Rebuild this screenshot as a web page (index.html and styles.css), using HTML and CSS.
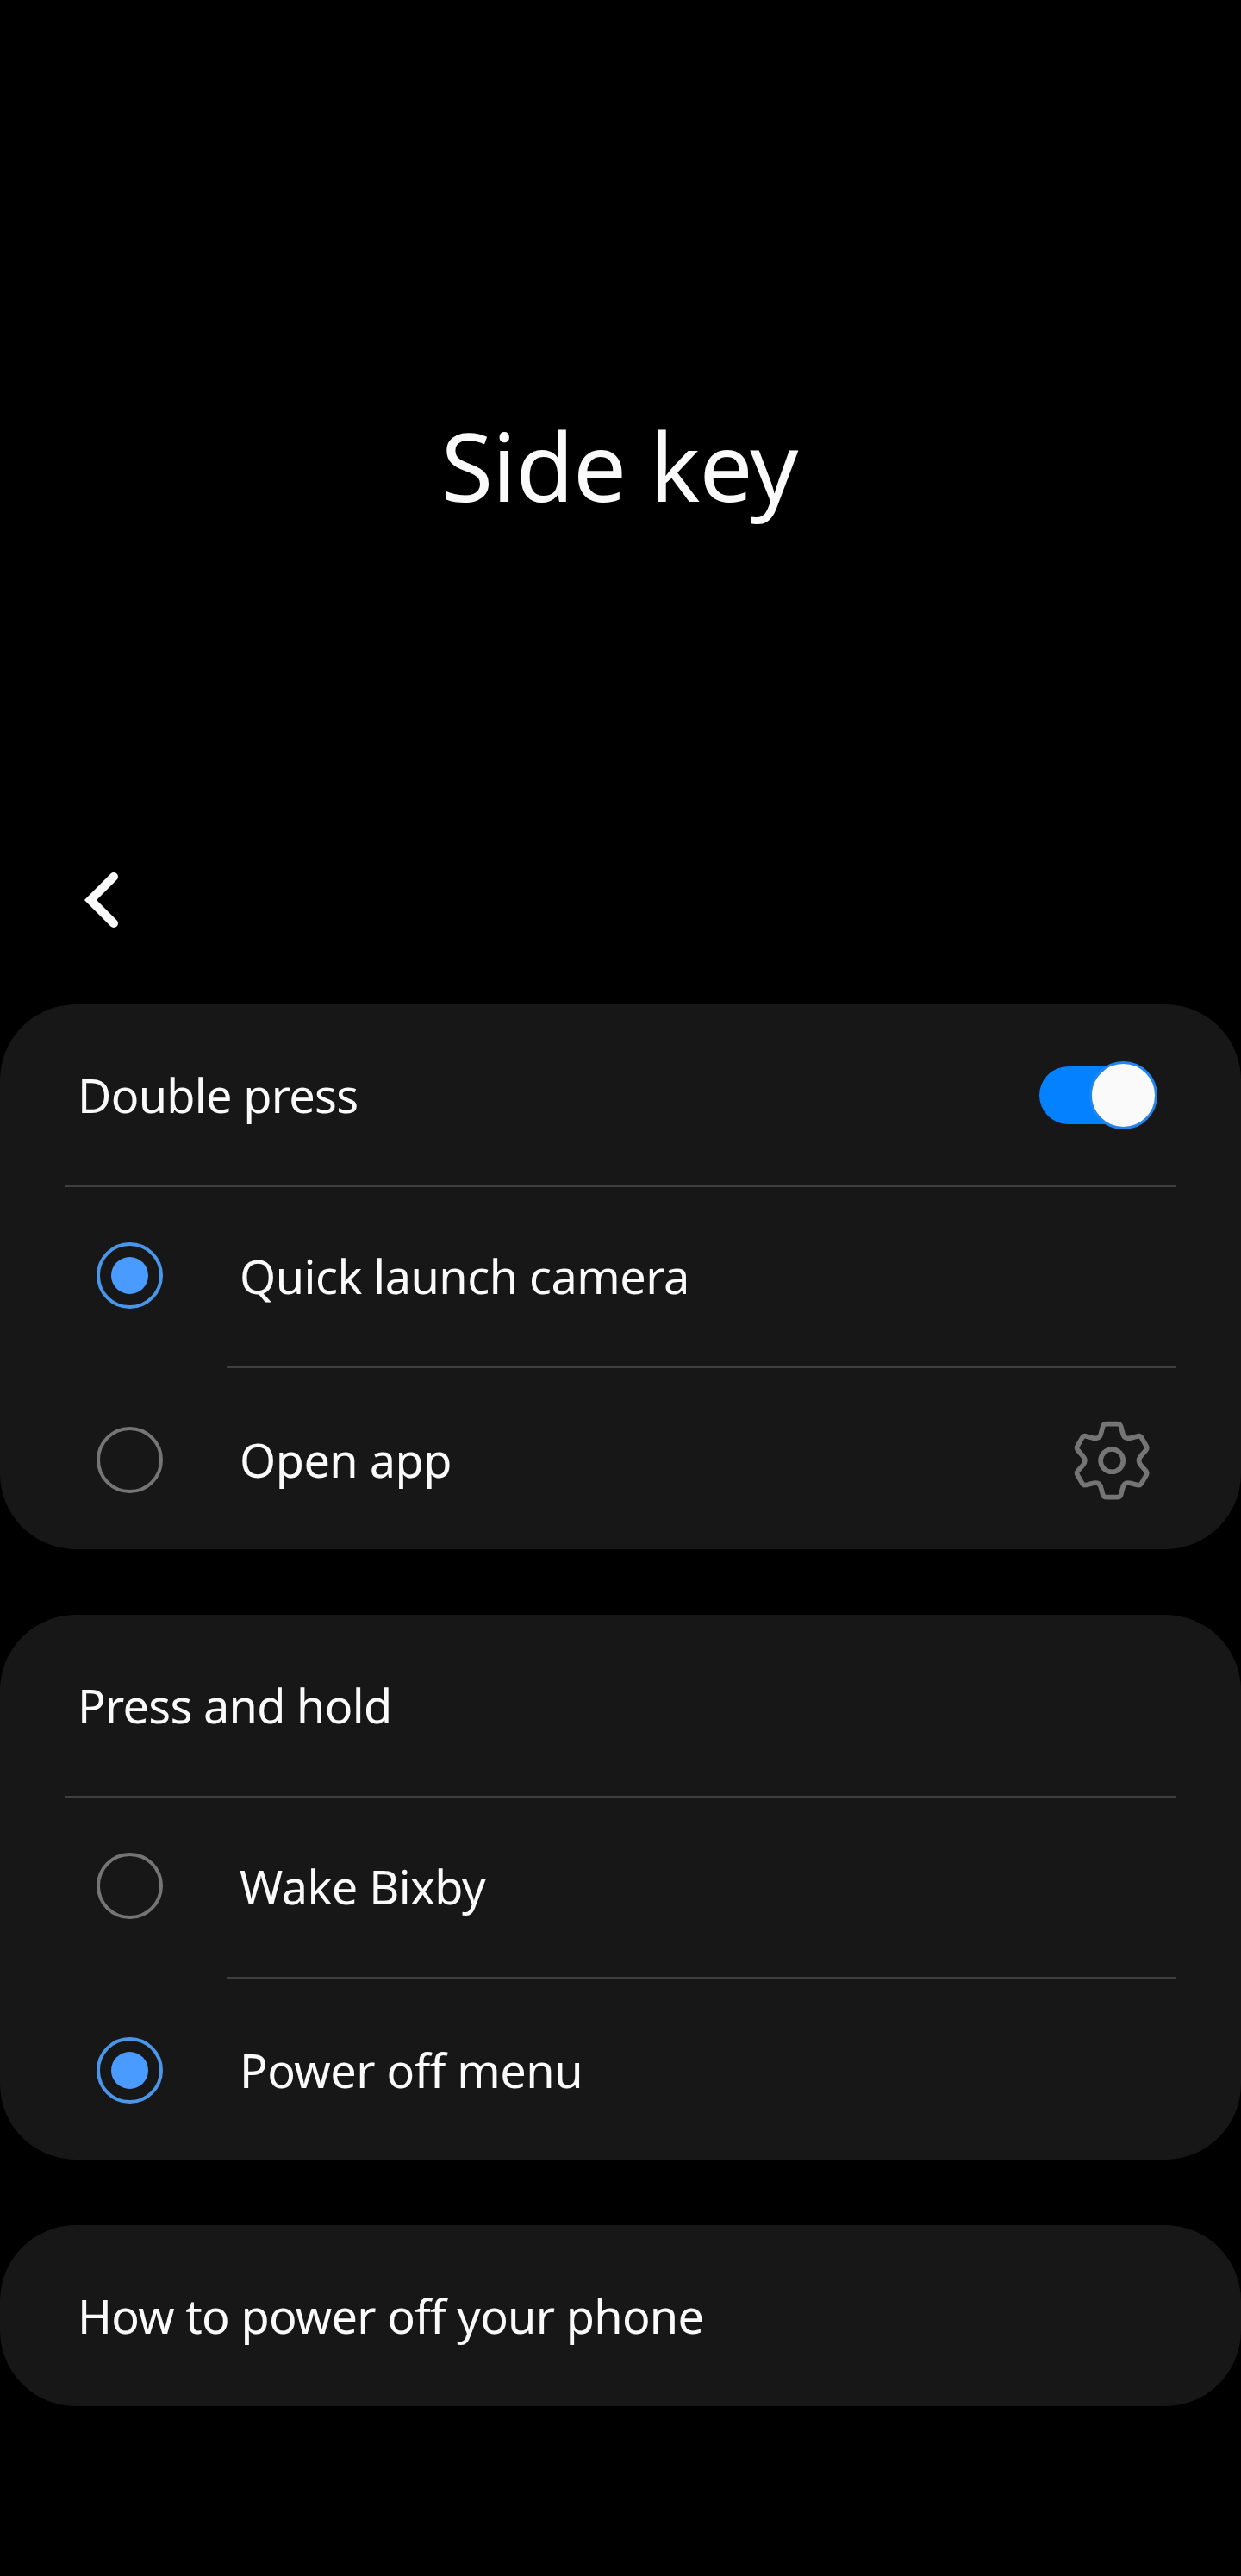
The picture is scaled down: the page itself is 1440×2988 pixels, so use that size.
FILE: index.html
```html
<!DOCTYPE html>
<html lang="en">
<head>
  <meta charset="UTF-8">
  <title>Side key</title>
  <link rel="stylesheet" href="styles.css">
</head>

<body>
  <div class="hero">
    <h1 class="hero-title">Side key</h1>
  </div>
  <div class="back-bar">
    <svg class="back-icon" width="44" height="68" viewBox="0 0 44 68">
      <path d="M38 7 L11 34 L38 61" fill="none" stroke="#fafafa" stroke-width="10" stroke-linecap="round" stroke-linejoin="miter"/>
    </svg>
  </div>

  <div class="card">
    <div class="card-head">
      <span class="card-label">Double press</span>
      <div class="switch"><div class="switch-thumb"></div></div>
    </div>
    <div class="line"></div>
    <div class="option">
      <div class="radio checked"></div>
      <span class="option-label">Quick launch camera</span>
    </div>
    <div class="line inset"></div>
    <div class="option">
      <div class="radio"></div>
      <span class="option-label">Open app</span>
      <svg class="gear" width="93" height="97" viewBox="40 16 280 290">
        <path d="M160 35 H198 Q208 35 211 45 L217 68 Q222 90 245 84 L268 78 Q278 75 283 84 L299 112 Q304 121 297 128 L281 146 Q266 163 281 180 L297 198 Q304 205 299 214 L283 242 Q278 251 268 248 L245 242 Q222 236 217 258 L211 281 Q208 291 198 291 H160 Q150 291 147 281 L141 258 Q136 236 113 242 L90 248 Q80 251 75 242 L59 214 Q54 205 61 198 L77 180 Q92 163 77 146 L61 128 Q54 121 59 112 L75 84 Q80 75 90 78 L113 84 Q136 90 141 68 L147 45 Q150 35 160 35 Z" fill="none" stroke="#757575" stroke-width="17"/>
        <circle cx="179" cy="163" r="39.5" fill="none" stroke="#757575" stroke-width="17"/>
      </svg>
    </div>
  </div>

  <div class="card">
    <div class="card-head">
      <span class="card-label">Press and hold</span>
    </div>
    <div class="line"></div>
    <div class="option">
      <div class="radio"></div>
      <span class="option-label">Wake Bixby</span>
    </div>
    <div class="line inset"></div>
    <div class="option">
      <div class="radio checked"></div>
      <span class="option-label">Power off menu</span>
    </div>
  </div>

  <div class="card">
    <div class="card-head">
      <span class="card-label">How to power off your phone</span>
    </div>
  </div>
</body>
</html>
```

FILE: styles.css
```css
html {
  font-family: 'Noto Sans', 'Open Sans', sans-serif;
  background: #000;
}
html, body {
  margin: 0;
  width: 100%;
}
*,
*::before,
*::after {
  box-sizing: border-box;
}
body {
  min-height: 2988px;
  color: #fafafa;
}
.hero {
  display: flex;
  align-items: center;
  justify-content: center;
  height: 1002px;
  padding: 76px 3px 0 0;
}
.hero-title {
  margin: 0;
  font-size: 110px;
  font-weight: 400;
  letter-spacing: -1px;
  line-height: 1;
}
.back-bar {
  display: flex;
  align-items: flex-start;
  height: 163px;
  padding: 8px 0 0 94px;
}
.card {
  margin-bottom: 76px;
  border-radius: 88px;
  background: #171717;
}
.card-head {
  display: flex;
  align-items: center;
  justify-content: space-between;
  height: 210px;
  padding: 0 100px 0 90px;
}
.card-label,
.option-label {
  font-size: 54px;
  font-weight: 400;
  letter-spacing: -0.7px;
}
.option-label {
  letter-spacing: -0.5px;
}
.line {
  height: 2px;
  margin: 0 75px;
  background: #3f3f3f;
}
.line.inset {
  margin-left: 263px;
}
.option {
  display: flex;
  align-items: center;
  height: 208px;
  padding: 0 103px 3px 112px;
}
.option:last-child {
  height: 210px;
  padding-top: 2px;
  padding-bottom: 0;
}
.radio {
  flex: none;
  position: relative;
  width: 77px;
  height: 77px;
  margin-right: 89px;
  border: 4px solid #757575;
  border-radius: 50%;
}
.radio.checked {
  border-color: #4a96ea;
}
.radio.checked::before {
  content: ' ';
  position: absolute;
  top: 13px;
  left: 13px;
  width: 43px;
  height: 43px;
  border-radius: 50%;
  background: #4a9bff;
}
.option-label {
  flex: 1;
}
.switch {
  position: relative;
  width: 134px;
  height: 67px;
  border-radius: 34px;
  background: #0381fe;
}
/* thumb sticks out past the track */
.switch-thumb {
  position: absolute;
  top: -6px;
  right: -3px;
  width: 79px;
  height: 79px;
  border: 3px solid #2185ee;
  border-radius: 50%;
  background: #fafafa;
}
```
